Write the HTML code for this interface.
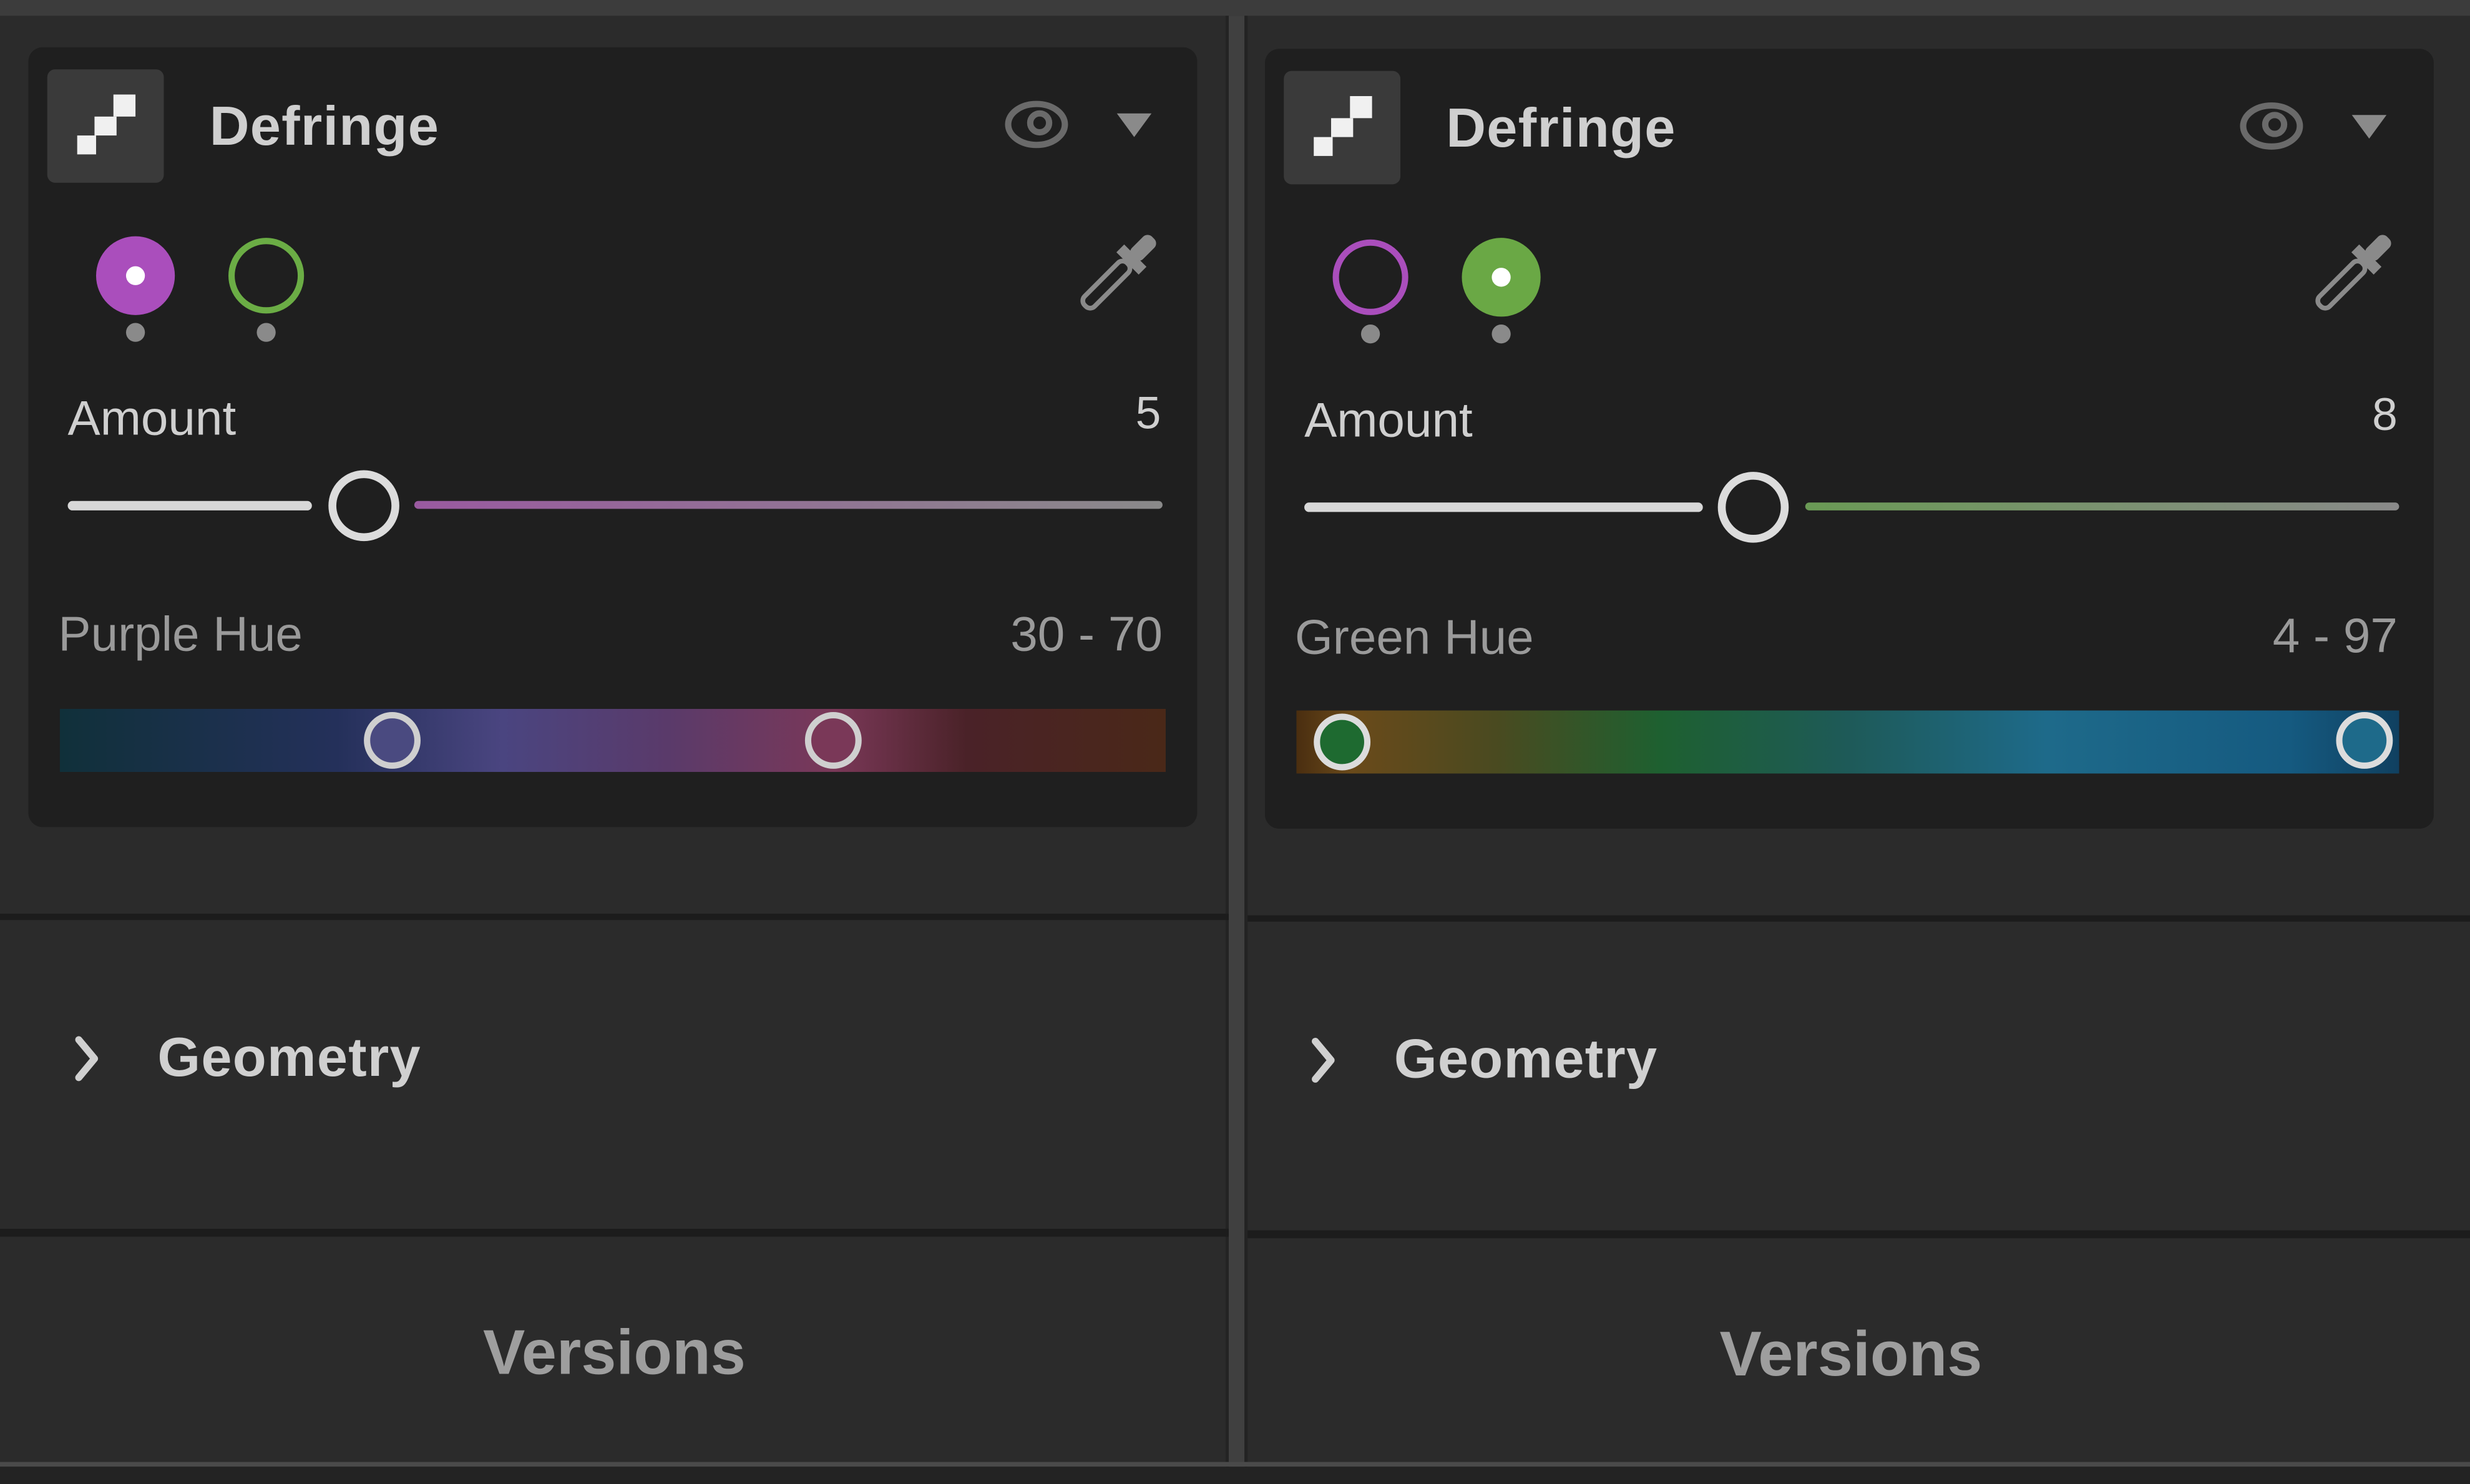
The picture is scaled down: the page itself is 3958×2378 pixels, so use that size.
<!DOCTYPE html>
<html><head><meta charset="utf-8"><style>
html,body{margin:0;padding:0;background:#2b2b2b;overflow:hidden}
svg{display:block}
text{font-family:"Liberation Sans",sans-serif}
</style></head><body>
<svg width="3958" height="2378" viewBox="0 0 1568 942" preserveAspectRatio="none" xmlns="http://www.w3.org/2000/svg">
<defs>
<linearGradient id="pl" x1="0" x2="1"><stop offset="0" stop-color="#9a5aa0"/><stop offset="1" stop-color="#8a8a8a"/></linearGradient>
<linearGradient id="gl" x1="0" x2="1"><stop offset="0" stop-color="#6a9a55"/><stop offset="1" stop-color="#8a8a8a"/></linearGradient>
<linearGradient id="ph" x1="0" x2="1">
<stop offset="0" stop-color="#10303a"/><stop offset="0.25" stop-color="#24305a"/><stop offset="0.4" stop-color="#4a4580"/><stop offset="0.55" stop-color="#5a3a6a"/><stop offset="0.7" stop-color="#7a3858"/><stop offset="0.82" stop-color="#4a2228"/><stop offset="1" stop-color="#4a2818"/></linearGradient>
<linearGradient id="gh" x1="0" x2="1">
<stop offset="0" stop-color="#4a2e10"/><stop offset="0.05" stop-color="#6a4a1a"/><stop offset="0.18" stop-color="#4a4a20"/><stop offset="0.33" stop-color="#1e6030"/><stop offset="0.5" stop-color="#1e5a58"/><stop offset="0.68" stop-color="#1e6a8a"/><stop offset="0.9" stop-color="#155a80"/><stop offset="1" stop-color="#104060"/></linearGradient>
<g id="chev"><path d="M0 0 L10 12 L0 24" fill="none" stroke="#d0d0d0" stroke-width="4.5" stroke-linecap="round" stroke-linejoin="round"/></g>
</defs>
<rect width="1568" height="942" fill="#2b2b2b"/>
<rect width="1568" height="10" fill="#3c3c3c"/>
<rect x="780" y="10" width="10" height="932" fill="#404040"/>
<rect x="778" y="10" width="2" height="932" fill="#232323"/>
<rect x="790" y="10" width="2" height="932" fill="#232323"/>
<!-- dividers -->
<rect x="0" y="580" width="780" height="4" fill="#1c1c1c"/>
<rect x="792" y="581" width="776" height="4" fill="#1c1c1c"/>
<rect x="0" y="780" width="780" height="5" fill="#1c1c1c"/>
<rect x="792" y="781" width="776" height="5" fill="#1c1c1c"/>
<rect x="0" y="928" width="1568" height="3" fill="#4a4a4a"/>
<rect x="0" y="931" width="1568" height="11" fill="#232323"/>

<!-- LEFT -->
<rect x="18" y="30" width="742" height="495" rx="9" fill="#1f1f1f"/>
<rect x="30" y="44" width="74" height="72" rx="5" fill="#3a3a3a"/>
<g fill="#f0f0f0"><rect x="72" y="60" width="14" height="14"/><rect x="60" y="74" width="14" height="12"/><rect x="49" y="86" width="12" height="12"/></g>
<text x="133" y="92" font-size="35" fill="#cfcfcf" font-weight="bold" letter-spacing="0.5">Defringe</text>
<ellipse cx="658" cy="79" rx="18" ry="13" fill="none" stroke="#6a6a6a" stroke-width="4"/><circle cx="660" cy="78" r="6" fill="none" stroke="#6a6a6a" stroke-width="4"/>
<path d="M709 72 L731 72 L720 87 Z" fill="#8a8a8a"/>
<circle cx="86" cy="175" r="25" fill="#aa4ebc"/><circle cx="86" cy="175" r="6" fill="#fff"/>
<circle cx="169" cy="175" r="22" fill="none" stroke="#6bad45" stroke-width="4"/>
<circle cx="86" cy="211" r="6" fill="#8a8a8a"/><circle cx="169" cy="211" r="6" fill="#8a8a8a"/>
<g transform="translate(708,175) rotate(45)"><rect x="-5" y="-34" width="10" height="18" rx="4" fill="#8a8a8a"/><rect x="-10" y="-18" width="20" height="7" fill="#8a8a8a"/><rect x="-4.5" y="-11" width="9" height="38" rx="4" fill="none" stroke="#8a8a8a" stroke-width="3"/></g>
<text x="43" y="276" font-size="31" fill="#cfcfcf">Amount</text>
<text x="737" y="272" font-size="29" fill="#cfcfcf" text-anchor="end">5</text>
<rect x="43" y="318" width="155" height="6" rx="3" fill="#d8d8d8"/>
<rect x="263" y="318" width="475" height="5" rx="2.5" fill="url(#pl)"/>
<circle cx="231" cy="321" r="20" fill="#1f1f1f" stroke="#dcdcdc" stroke-width="5"/>
<text x="37" y="413" font-size="31" fill="#9a9a9a">Purple Hue</text>
<text x="738" y="413" font-size="31" fill="#9a9a9a" text-anchor="end">30 - 70</text>
<rect x="38" y="450" width="702" height="40" fill="url(#ph)"/>
<circle cx="249" cy="470" r="16" fill="#4a4a80" stroke="#cfcfcf" stroke-width="4"/>
<circle cx="529" cy="470" r="16" fill="#7a3858" stroke="#cfcfcf" stroke-width="4"/>
<use href="#chev" x="50" y="660"/>
<text x="100" y="683" font-size="35" fill="#d0d0d0" font-weight="bold" letter-spacing="0.5">Geometry</text>
<text x="390" y="872" font-size="40" fill="#9e9e9e" font-weight="bold" text-anchor="middle">Versions</text>

<!-- RIGHT -->
<rect x="803" y="31" width="742" height="495" rx="9" fill="#1f1f1f"/>
<rect x="815" y="45" width="74" height="72" rx="5" fill="#3a3a3a"/>
<g fill="#f0f0f0"><rect x="857" y="61" width="14" height="14"/><rect x="845" y="75" width="14" height="12"/><rect x="834" y="87" width="12" height="12"/></g>
<text x="918" y="93" font-size="35" fill="#cfcfcf" font-weight="bold" letter-spacing="0.5">Defringe</text>
<ellipse cx="1442" cy="80" rx="18" ry="13" fill="none" stroke="#6a6a6a" stroke-width="4"/><circle cx="1444" cy="79" r="6" fill="none" stroke="#6a6a6a" stroke-width="4"/>
<path d="M1493 73 L1515 73 L1504 88 Z" fill="#8a8a8a"/>
<circle cx="870" cy="176" r="22" fill="none" stroke="#aa4ebc" stroke-width="4"/>
<circle cx="953" cy="176" r="25" fill="#6aa845"/><circle cx="953" cy="176" r="6" fill="#fff"/>
<circle cx="870" cy="212" r="6" fill="#8a8a8a"/><circle cx="953" cy="212" r="6" fill="#8a8a8a"/>
<g transform="translate(1492,175) rotate(45)"><rect x="-5" y="-34" width="10" height="18" rx="4" fill="#8a8a8a"/><rect x="-10" y="-18" width="20" height="7" fill="#8a8a8a"/><rect x="-4.5" y="-11" width="9" height="38" rx="4" fill="none" stroke="#8a8a8a" stroke-width="3"/></g>
<text x="828" y="277" font-size="31" fill="#cfcfcf">Amount</text>
<text x="1522" y="273" font-size="29" fill="#cfcfcf" text-anchor="end">8</text>
<rect x="828" y="319" width="253" height="6" rx="3" fill="#d8d8d8"/>
<rect x="1146" y="319" width="377" height="5" rx="2.5" fill="url(#gl)"/>
<circle cx="1113" cy="322" r="20" fill="#1f1f1f" stroke="#dcdcdc" stroke-width="5"/>
<text x="822" y="415" font-size="31" fill="#9a9a9a">Green Hue</text>
<text x="1522" y="414" font-size="31" fill="#9a9a9a" text-anchor="end">4 - 97</text>
<rect x="823" y="451" width="700" height="40" fill="url(#gh)"/>
<circle cx="852" cy="471" r="16" fill="#1e6a30" stroke="#dcdcdc" stroke-width="4"/>
<circle cx="1501" cy="470" r="16" fill="#1e6a8a" stroke="#dcdcdc" stroke-width="4"/>
<use href="#chev" x="835" y="661"/>
<text x="885" y="684" font-size="35" fill="#d0d0d0" font-weight="bold" letter-spacing="0.5">Geometry</text>
<text x="1175" y="873" font-size="40" fill="#9e9e9e" font-weight="bold" text-anchor="middle">Versions</text>
</svg>
</body></html>
